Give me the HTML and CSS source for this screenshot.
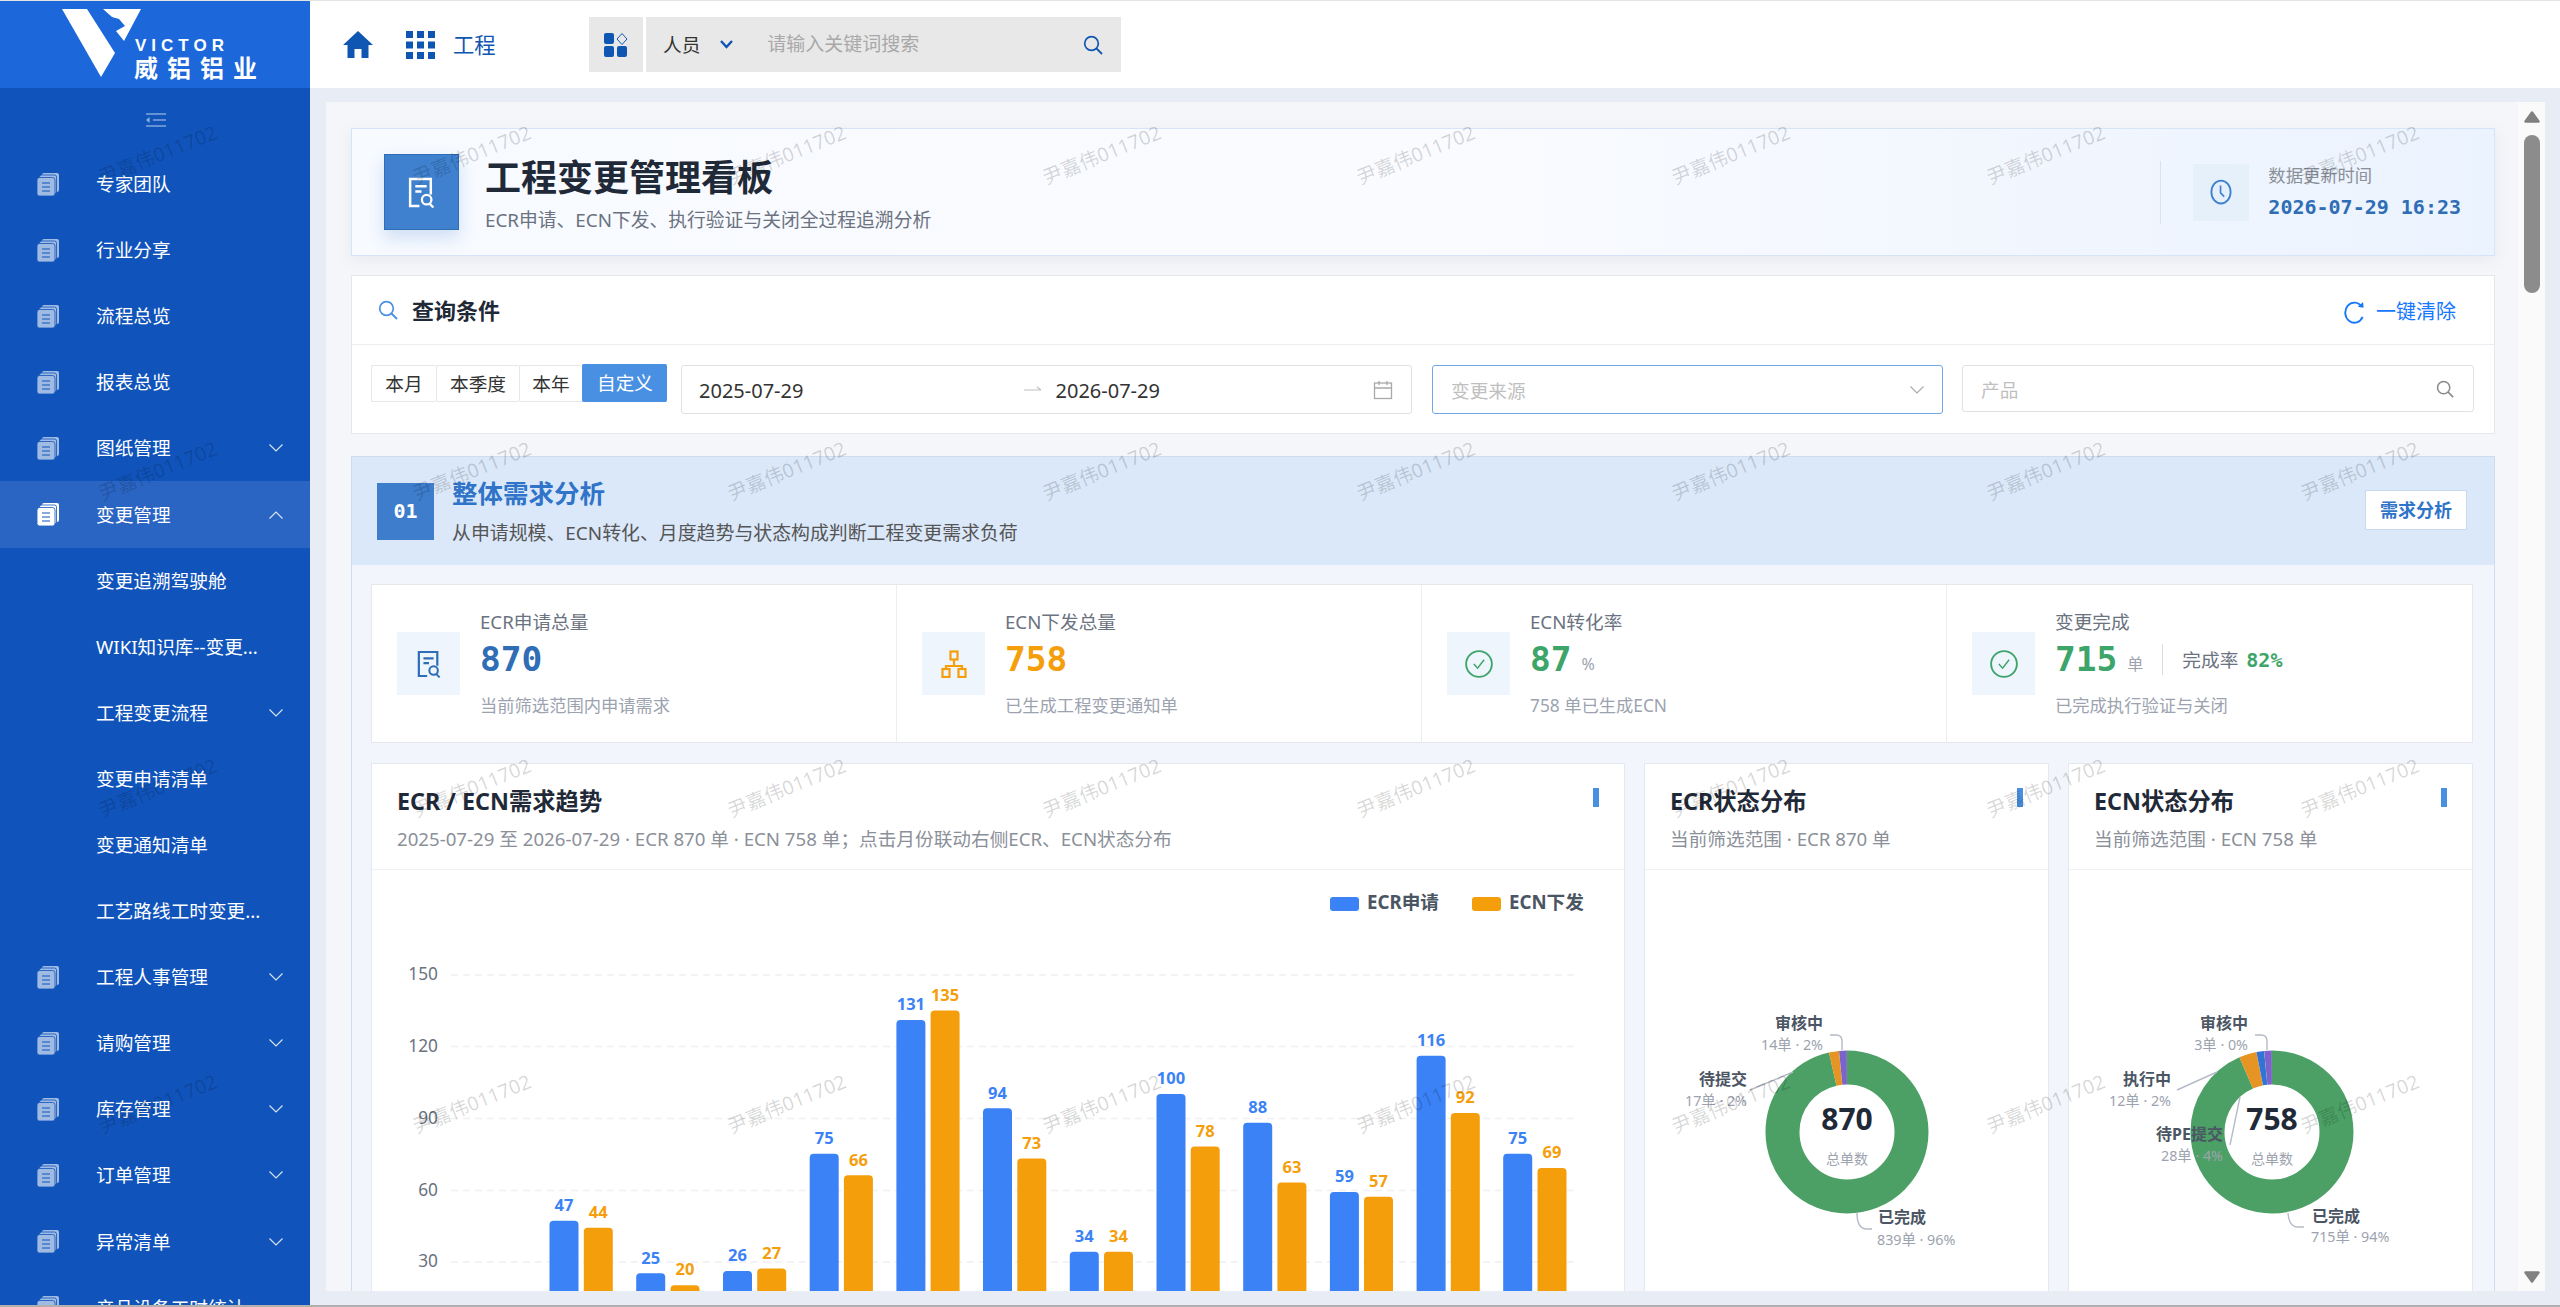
FILE: index.html
```html
<!doctype html>
<html lang="zh-CN">
  <head>
    <meta charset="UTF-8" />
    <meta name="viewport" content="width=device-width, initial-scale=1.0" />
    <title>工程变更管理看板</title>
    <link rel="stylesheet" href="styles.css">
  </head>
  <body>
    <svg class="icon-defs" aria-hidden="true">
      <symbol id="i-docs" viewBox="0 0 22 23">
        <rect x="5" y="0" width="17" height="19" rx="2" fill="#fff" />
        <rect x="2.5" y="2" width="17" height="19" rx="2" fill="#fff" stroke="#1054bb" stroke-width="0.8" />
        <rect x="0" y="4.5" width="18" height="18.5" rx="2.5" fill="#fff" stroke="#1054bb" stroke-width="0.8" />
        <path d="M5 10h8M5 14h8M5 18h8" stroke="#1054bb" stroke-width="1.2" />
      </symbol>
      <symbol id="i-chevron" viewBox="0 0 14 8">
        <path d="M0.5 0.5L7 7L13.5 0.5" fill="none" stroke="currentColor" stroke-width="1.1" />
      </symbol>
      <symbol id="i-search" viewBox="0 0 20 20">
        <circle cx="8.5" cy="8.5" r="6.8" fill="none" stroke="currentColor" stroke-width="1.7" />
        <path d="M13.5 13.5L19 19" stroke="currentColor" stroke-width="1.8" />
      </symbol>
      <symbol id="i-docsearch" viewBox="0 0 26 30">
        <path d="M11 28H2V2h20v15" fill="none" stroke="currentColor" stroke-width="2.4" />
        <path d="M7 9h11M7 14h6" stroke="currentColor" stroke-width="2.4" />
        <circle cx="18" cy="22" r="4.6" fill="none" stroke="currentColor" stroke-width="2.2" />
        <path d="M21 26l3.5 3.5" stroke="currentColor" stroke-width="2.2" />
      </symbol>
      <symbol id="i-check" viewBox="0 0 30 30">
        <circle cx="15" cy="15" r="13.8" fill="none" stroke="currentColor" stroke-width="2" />
        <path d="M9.5 15l4 4.5 7-9" fill="none" stroke="currentColor" stroke-width="1.6" />
      </symbol>
    </svg>

    <div class="app">
      <aside class="sidebar">
        <div class="logo">
          <svg viewBox="0 0 310 87" width="310" height="87">
            <polygon points="62,8 87,8 115,52 101,76" fill="#fff" />
            <polygon points="103,8 141,8 124,40 116,30 125,25 119,18 112,16" fill="#fff" />
            <text class="logo-en" x="135" y="50">VICTOR</text>
            <text class="logo-cn" x="134" y="76">威铝铝业</text>
          </svg>
        </div>
        <div class="collapse">
          <svg viewBox="0 0 20 14" width="20" height="14">
            <path d="M0 1h20M7 7h13M0 13h20" stroke="#b9cdec" stroke-width="1" />
            <path d="M0 7l3.5-3v6z" fill="#8fb0e2" />
          </svg>
        </div>
        <nav class="nav">
          <a class="nav-item"><svg class="nav-icon"><use href="#i-docs" /></svg><span>专家团队</span></a>
          <a class="nav-item"><svg class="nav-icon"><use href="#i-docs" /></svg><span>行业分享</span></a>
          <a class="nav-item"><svg class="nav-icon"><use href="#i-docs" /></svg><span>流程总览</span></a>
          <a class="nav-item"><svg class="nav-icon"><use href="#i-docs" /></svg><span>报表总览</span></a>
          <a class="nav-item"><svg class="nav-icon"><use href="#i-docs" /></svg><span>图纸管理</span><svg class="nav-arrow"><use href="#i-chevron" /></svg></a>
          <a class="nav-item active"><svg class="nav-icon"><use href="#i-docs" /></svg><span>变更管理</span><svg class="nav-arrow up"><use href="#i-chevron" /></svg></a>
          <a class="nav-item sub"><span>变更追溯驾驶舱</span></a>
          <a class="nav-item sub"><span>WIKI知识库--变更...</span></a>
          <a class="nav-item sub"><span>工程变更流程</span><svg class="nav-arrow"><use href="#i-chevron" /></svg></a>
          <a class="nav-item sub"><span>变更申请清单</span></a>
          <a class="nav-item sub"><span>变更通知清单</span></a>
          <a class="nav-item sub"><span>工艺路线工时变更...</span></a>
          <a class="nav-item"><svg class="nav-icon"><use href="#i-docs" /></svg><span>工程人事管理</span><svg class="nav-arrow"><use href="#i-chevron" /></svg></a>
          <a class="nav-item"><svg class="nav-icon"><use href="#i-docs" /></svg><span>请购管理</span><svg class="nav-arrow"><use href="#i-chevron" /></svg></a>
          <a class="nav-item"><svg class="nav-icon"><use href="#i-docs" /></svg><span>库存管理</span><svg class="nav-arrow"><use href="#i-chevron" /></svg></a>
          <a class="nav-item"><svg class="nav-icon"><use href="#i-docs" /></svg><span>订单管理</span><svg class="nav-arrow"><use href="#i-chevron" /></svg></a>
          <a class="nav-item"><svg class="nav-icon"><use href="#i-docs" /></svg><span>异常清单</span><svg class="nav-arrow"><use href="#i-chevron" /></svg></a>
          <a class="nav-item"><svg class="nav-icon"><use href="#i-docs" /></svg><span>产品设备工时统计</span></a>
        </nav>
      </aside>

      <div class="main">
        <header class="topbar">
          <svg class="home-icon" viewBox="0 0 30 27"><path d="M15 0L0 14h4.500v13h7v-9h7v9h7V14H30z" /></svg>
          <svg class="apps-icon" viewBox="0 0 29 28">
            <rect width="7" height="7" /><rect x="11" width="7" height="7" /><rect x="22" width="7" height="7" />
            <rect y="10.500" width="7" height="7" /><rect x="11" y="10.500" width="7" height="7" /><rect x="22" y="10.500" width="7" height="7" />
            <rect y="21" width="7" height="7" /><rect x="11" y="21" width="7" height="7" /><rect x="22" y="21" width="7" height="7" />
          </svg>
          <span class="app-name">工程</span>
          <div class="top-search">
            <div class="ts-icon">
              <svg viewBox="0 0 26 24" width="26" height="24">
                <rect x="1" y="0" width="10" height="11" rx="2" fill="#0f56b3" />
                <rect x="1" y="13" width="10" height="11" rx="2" fill="#0f56b3" />
                <rect x="14" y="13" width="10" height="11" rx="2" fill="#0f56b3" />
                <path d="M19 0.500l5 5.500-5 5.500-5-5.500z" fill="none" stroke="#0f56b3" stroke-width="1" />
              </svg>
            </div>
            <div class="ts-box">
              <span class="ts-type">人员</span>
              <svg class="ts-caret" viewBox="0 0 13 9" width="13" height="9"><path d="M1 1l5.500 6L12 1" fill="none" stroke="#0f56b3" stroke-width="2.400" /></svg>
              <span class="ts-placeholder">请输入关键词搜索</span>
              <svg class="ts-search"><use href="#i-search" /></svg>
            </div>
          </div>
        </header>

        <div class="workspace">
          <div class="panel">
            <div class="content">
              <section class="hero">
                <div class="hero-icon"><svg width="27" height="31"><use href="#i-docsearch" /></svg></div>
                <div class="hero-text">
                  <h1>工程变更管理看板</h1>
                  <p>ECR申请、ECN下发、执行验证与关闭全过程追溯分析</p>
                </div>
                <div class="hero-time">
                  <div class="time-icon">
                    <svg viewBox="0 0 24 28" width="22" height="26">
                      <ellipse cx="12" cy="14" rx="10.500" ry="12.500" fill="none" stroke="#3d80cf" stroke-width="2" />
                      <path d="M11.500 7v8l4 4" fill="none" stroke="#3d80cf" stroke-width="1.800" />
                    </svg>
                  </div>
                  <div>
                    <div class="time-label">数据更新时间</div>
                    <div class="time-value">2026-07-29 16:23</div>
                  </div>
                </div>
              </section>

              <section class="query">
                <div class="query-head">
                  <svg class="query-icon"><use href="#i-search" /></svg>
                  <h2>查询条件</h2>
                  <a class="clear-btn">
                    <svg viewBox="0 0 22 24" width="21" height="24">
                      <path d="M18.500 6.500A9.500 10.500 0 1 0 19.500 17" fill="none" stroke="#1677ff" stroke-width="2" />
                      <path d="M14.500 6.500L20.500 7.500L20 1.500z" fill="#1677ff" />
                    </svg>
                    一键清除
                  </a>
                </div>
                <div class="query-row">
                  <div class="range-tabs">
                    <span class="tab tab-a">本月</span>
                    <span class="tab tab-b">本季度</span>
                    <span class="tab tab-c">本年</span>
                    <span class="tab tab-d on">自定义</span>
                  </div>
                  <div class="field date-range">
                    <span class="date">2025-07-29</span>
                    <svg class="date-arrow" viewBox="0 0 18 8" width="18" height="8"><path d="M0 4h17M13 1l4 3" fill="none" stroke="#bfbfbf" stroke-width="1.200" /></svg>
                    <span class="date">2026-07-29</span>
                    <svg viewBox="0 0 20 20" width="20" height="20">
                      <rect x="1.500" y="3" width="17" height="15.500" fill="none" stroke="#a9a9a9" stroke-width="1.300" />
                      <path d="M1.500 8h17M6 1v4M14 1v4" stroke="#a9a9a9" stroke-width="1.300" />
                    </svg>
                  </div>
                  <div class="field select-field">
                    <span class="placeholder">变更来源</span>
                    <svg class="select-arrow"><use href="#i-chevron" /></svg>
                  </div>
                  <div class="field product-field">
                    <span class="placeholder">产品</span>
                    <svg class="product-search"><use href="#i-search" /></svg>
                  </div>
                </div>
              </section>

              <section class="demand">
                <div class="demand-head">
                  <div class="demand-no">01</div>
                  <div class="demand-title">
                    <h2>整体需求分析</h2>
                    <p>从申请规模、ECN转化、月度趋势与状态构成判断工程变更需求负荷</p>
                  </div>
                  <span class="demand-tag">需求分析</span>
                </div>

                <div class="demand-body">
                  <div class="stats">
                    <div class="stat">
                      <div class="stat-icon blue"><svg width="24" height="28"><use href="#i-docsearch" /></svg></div>
                      <div>
                        <div class="stat-label">ECR申请总量</div>
                        <div class="stat-num"><b class="blue">870</b></div>
                        <div class="stat-sub">当前筛选范围内申请需求</div>
                      </div>
                    </div>
                    <div class="stat">
                      <div class="stat-icon orange">
                        <svg viewBox="0 0 26 28" width="26" height="28" fill="none" stroke="#f59e0b" stroke-width="2.200">
                          <rect x="9.500" y="1.500" width="7" height="8" />
                          <path d="M13 10v6M5 20v-4h16v4" />
                          <rect x="1.500" y="19" width="7" height="8" />
                          <rect x="17.500" y="19" width="7" height="8" />
                        </svg>
                      </div>
                      <div>
                        <div class="stat-label">ECN下发总量</div>
                        <div class="stat-num"><b class="orange">758</b></div>
                        <div class="stat-sub">已生成工程变更通知单</div>
                      </div>
                    </div>
                    <div class="stat">
                      <div class="stat-icon green"><svg width="28" height="30"><use href="#i-check" /></svg></div>
                      <div>
                        <div class="stat-label">ECN转化率</div>
                        <div class="stat-num"><b class="green">87</b><small>%</small></div>
                        <div class="stat-sub">758 单已生成ECN</div>
                      </div>
                    </div>
                    <div class="stat">
                      <div class="stat-icon green"><svg width="28" height="30"><use href="#i-check" /></svg></div>
                      <div>
                        <div class="stat-label">变更完成</div>
                        <div class="stat-num">
                          <b class="green">715</b><small>单</small>
                          <span class="stat-rate">完成率<em>82%</em></span>
                        </div>
                        <div class="stat-sub">已完成执行验证与关闭</div>
                      </div>
                    </div>
                  </div>

                  <div class="charts">
                    <div class="chart-card">
                      <div class="chart-head">
                        <div>
                          <h3>ECR / ECN需求趋势</h3>
                          <p>2025-07-29 至 2026-07-29 · ECR 870 单 · ECN 758 单；点击月份联动右侧ECR、ECN状态分布</p>
                        </div>
                        <i class="chart-mark"></i>
                      </div>
                      <svg class="chart-svg" viewBox="372 870 1251 470" width="1251" height="470">
                        <g class="legend">
                          <rect x="1330" y="897" width="29" height="14" rx="3" fill="#3b82f6" />
                          <text x="1367" y="909">ECR申请</text>
                          <rect x="1472" y="897" width="29" height="14" rx="3" fill="#f59e0b" />
                          <text x="1509" y="909">ECN下发</text>
                        </g>
                        <g class="grid-lines">
                          <path d="M451 975H1578M451 1046.500H1578M451 1118.500H1578M451 1190.500H1578M451 1262H1578" />
                        </g>
                        <g class="y-axis">
                          <text x="438" y="980">150</text>
                          <text x="438" y="1052">120</text>
                          <text x="438" y="1124">90</text>
                          <text x="438" y="1196">60</text>
                          <text x="438" y="1267">30</text>
                        </g>
                        <g fill="#3b82f6">
                          <rect x="549.500" y="1220.700" width="29" height="112.300" rx="4" />
                          <rect x="636.200" y="1273.200" width="29" height="59.800" rx="4" />
                          <rect x="723" y="1270.900" width="29" height="62.100" rx="4" />
                          <rect x="809.700" y="1153.800" width="29" height="179.200" rx="4" />
                          <rect x="896.400" y="1019.900" width="29" height="313.100" rx="4" />
                          <rect x="983" y="1108.300" width="29" height="224.700" rx="4" />
                          <rect x="1069.800" y="1251.700" width="29" height="81.300" rx="4" />
                          <rect x="1156.500" y="1094" width="29" height="239" rx="4" />
                          <rect x="1243.200" y="1122.700" width="29" height="210.300" rx="4" />
                          <rect x="1329.900" y="1192" width="29" height="141" rx="4" />
                          <rect x="1416.600" y="1055.800" width="29" height="277.200" rx="4" />
                          <rect x="1503.200" y="1153.800" width="29" height="179.200" rx="4" />
                        </g>
                        <g fill="#f59e0b">
                          <rect x="583.800" y="1227.800" width="29" height="105.200" rx="4" />
                          <rect x="670.500" y="1285.200" width="29" height="47.800" rx="4" />
                          <rect x="757.200" y="1268.500" width="29" height="64.500" rx="4" />
                          <rect x="843.900" y="1175.300" width="29" height="157.700" rx="4" />
                          <rect x="930.600" y="1010.400" width="29" height="322.600" rx="4" />
                          <rect x="1017.300" y="1158.500" width="29" height="174.500" rx="4" />
                          <rect x="1104" y="1251.700" width="29" height="81.300" rx="4" />
                          <rect x="1190.700" y="1146.600" width="29" height="186.400" rx="4" />
                          <rect x="1277.400" y="1182.400" width="29" height="150.600" rx="4" />
                          <rect x="1364" y="1196.800" width="29" height="136.200" rx="4" />
                          <rect x="1450.800" y="1113.100" width="29" height="219.900" rx="4" />
                          <rect x="1537.500" y="1168.100" width="29" height="164.900" rx="4" />
                        </g>
                        <g class="bar-labels" fill="#3b82f6">
                          <text x="564" y="1211">47</text>
                          <text x="650.700" y="1264">25</text>
                          <text x="737.500" y="1261">26</text>
                          <text x="824.200" y="1144">75</text>
                          <text x="910.900" y="1010">131</text>
                          <text x="997.500" y="1099">94</text>
                          <text x="1084.300" y="1242">34</text>
                          <text x="1171" y="1084">100</text>
                          <text x="1257.700" y="1113">88</text>
                          <text x="1344.400" y="1182">59</text>
                          <text x="1431.100" y="1046">116</text>
                          <text x="1517.700" y="1144">75</text>
                        </g>
                        <g class="bar-labels" fill="#f59e0b">
                          <text x="598.300" y="1218">44</text>
                          <text x="685" y="1275">20</text>
                          <text x="771.700" y="1259">27</text>
                          <text x="858.400" y="1166">66</text>
                          <text x="945.100" y="1001">135</text>
                          <text x="1031.800" y="1149">73</text>
                          <text x="1118.500" y="1242">34</text>
                          <text x="1205.200" y="1137">78</text>
                          <text x="1291.900" y="1173">63</text>
                          <text x="1378.500" y="1187">57</text>
                          <text x="1465.300" y="1103">92</text>
                          <text x="1552" y="1158">69</text>
                        </g>
                      </svg>
                    </div>

                    <div class="chart-card">
                      <div class="chart-head">
                        <div>
                          <h3>ECR状态分布</h3>
                          <p>当前筛选范围 · ECR 870 单</p>
                        </div>
                        <i class="chart-mark"></i>
                      </div>
                      <svg class="chart-svg" viewBox="1645 870 403 421" width="403" height="421">
                        <g fill="none" stroke-width="34">
                          <circle cx="1847" cy="1132" r="64.500" pathLength="360" stroke="#4ca066" stroke-dasharray="347.200 360" transform="rotate(-90 1847 1132)" />
                          <circle cx="1847" cy="1132" r="64.500" pathLength="360" stroke="#e69423" stroke-dasharray="7.200 360" transform="rotate(-102.800 1847 1132)" />
                          <circle cx="1847" cy="1132" r="64.500" pathLength="360" stroke="#7c63c9" stroke-dasharray="5.600 360" transform="rotate(-95.600 1847 1132)" />
                        </g>
                        <g class="leader">
                          <path d="M1830 1035h6q6 0 6 6v9" />
                          <path d="M1750 1090L1793 1072" />
                          <path d="M1857 1213q0 16 10 16h5" />
                        </g>
                        <text class="donut-total" x="1847" y="1130">870</text>
                        <text class="donut-cap" x="1847" y="1164">总单数</text>
                        <text class="donut-name" x="1823" y="1029" text-anchor="end">审核中</text>
                        <text class="donut-sub" x="1823" y="1050" text-anchor="end">14单 · 2%</text>
                        <text class="donut-name" x="1747" y="1085" text-anchor="end">待提交</text>
                        <text class="donut-sub" x="1747" y="1106" text-anchor="end">17单 · 2%</text>
                        <text class="donut-name" x="1878" y="1223">已完成</text>
                        <text class="donut-sub" x="1877" y="1245">839单 · 96%</text>
                      </svg>
                    </div>

                    <div class="chart-card">
                      <div class="chart-head">
                        <div>
                          <h3>ECN状态分布</h3>
                          <p>当前筛选范围 · ECN 758 单</p>
                        </div>
                        <i class="chart-mark"></i>
                      </div>
                      <svg class="chart-svg" viewBox="2069 870 403 421" width="403" height="421">
                        <g fill="none" stroke-width="34">
                          <circle cx="2272" cy="1132" r="64.500" pathLength="360" stroke="#4ca066" stroke-dasharray="336.400 360" transform="rotate(-90 2272 1132)" />
                          <circle cx="2272" cy="1132" r="64.500" pathLength="360" stroke="#e69423" stroke-dasharray="12.600 360" transform="rotate(-113.600 2272 1132)" />
                          <circle cx="2272" cy="1132" r="64.500" pathLength="360" stroke="#3274d6" stroke-dasharray="5.500 360" transform="rotate(-101 2272 1132)" />
                          <circle cx="2272" cy="1132" r="64.500" pathLength="360" stroke="#7c63c9" stroke-dasharray="5.500 360" transform="rotate(-95.500 2272 1132)" />
                        </g>
                        <g class="leader">
                          <path d="M2255 1035h6q6 0 6 6v9" />
                          <path d="M2177 1090L2217 1072" />
                          <path d="M2230 1145L2240 1097" />
                          <path d="M2288 1213q1 14 10 14h6" />
                        </g>
                        <text class="donut-total" x="2272" y="1130">758</text>
                        <text class="donut-cap" x="2272" y="1164">总单数</text>
                        <text class="donut-name" x="2248" y="1029" text-anchor="end">审核中</text>
                        <text class="donut-sub" x="2248" y="1050" text-anchor="end">3单 · 0%</text>
                        <text class="donut-name" x="2171" y="1085" text-anchor="end">执行中</text>
                        <text class="donut-sub" x="2171" y="1106" text-anchor="end">12单 · 2%</text>
                        <text class="donut-name" x="2223" y="1140" text-anchor="end">待PE提交</text>
                        <text class="donut-sub" x="2223" y="1161" text-anchor="end">28单 · 4%</text>
                        <text class="donut-name" x="2312" y="1222">已完成</text>
                        <text class="donut-sub" x="2311" y="1242">715单 · 94%</text>
                      </svg>
                    </div>
                  </div>
                </div>
              </section>
            </div>
            <div class="scroll-track">
              <svg class="scroll-arrow" viewBox="0 0 16 12" width="16" height="12"><path d="M8 1.500L14.500 10.500H1.500z" stroke-width="2.500" /></svg>
              <div class="scroll-thumb"></div>
              <svg class="scroll-arrow down" viewBox="0 0 16 12" width="16" height="12"><path d="M8 10.500L14.500 1.500H1.500z" stroke-width="2.500" /></svg>
            </div>
          </div>
        </div>
      </div>
    </div>
    <div class="hscroll"></div>

    <div class="watermarks">
      <span>尹嘉伟011702</span><span>尹嘉伟011702</span><span>尹嘉伟011702</span><span>尹嘉伟011702</span><span>尹嘉伟011702</span><span>尹嘉伟011702</span><span>尹嘉伟011702</span><span>尹嘉伟011702</span>
      <span>尹嘉伟011702</span><span>尹嘉伟011702</span><span>尹嘉伟011702</span><span>尹嘉伟011702</span><span>尹嘉伟011702</span><span>尹嘉伟011702</span><span>尹嘉伟011702</span><span>尹嘉伟011702</span>
      <span>尹嘉伟011702</span><span>尹嘉伟011702</span><span>尹嘉伟011702</span><span>尹嘉伟011702</span><span>尹嘉伟011702</span><span>尹嘉伟011702</span><span>尹嘉伟011702</span><span>尹嘉伟011702</span>
      <span>尹嘉伟011702</span><span>尹嘉伟011702</span><span>尹嘉伟011702</span><span>尹嘉伟011702</span><span>尹嘉伟011702</span><span>尹嘉伟011702</span><span>尹嘉伟011702</span><span>尹嘉伟011702</span>
    </div>
  </body>
</html>
```

FILE: styles.css
```css
* {
  box-sizing: border-box;
}
html,
body {
  margin: 0;
  height: 100%;
  overflow: hidden;
}
body {
  position: relative;
  display: flex;
  flex-direction: column;
  font-family: "Noto Sans", "Noto Sans CJK SC", sans-serif;
  font-size: 18.67px;
  line-height: 1.5;
  color: #333;
  background: #e8ecf4;
}
h1,
h2,
h3,
p {
  margin: 0;
}
.icon-defs {
  position: absolute;
  width: 0;
  height: 0;
}
.app {
  flex: 1;
  min-height: 0;
  display: flex;
  border-top: 1px solid #e4e4e4;
}
.hscroll {
  height: 2px;
  background: #b0b0b0;
}

/* sidebar */
.sidebar {
  width: 310px;
  flex: none;
  overflow: hidden;
  background: #1054bb;
  color: #fff;
}
.logo {
  height: 87px;
  background: #1c68da;
}
.logo svg {
  display: block;
}
.logo-en {
  font-family: "Liberation Sans", sans-serif;
  font-size: 17px;
  font-weight: 700;
  letter-spacing: 5px;
  fill: #fff;
}
.logo-cn {
  font-size: 24px;
  font-weight: 700;
  letter-spacing: 9px;
  fill: #fff;
}
.collapse {
  height: 63px;
  display: flex;
  align-items: center;
  justify-content: center;
  padding-left: 2px;
}
.nav-item {
  height: 66.1px;
  display: flex;
  align-items: center;
  padding-left: 37px;
  padding-right: 27px;
}
.nav-item span {
  margin-left: 37px;
  white-space: nowrap;
}
.nav-item.sub {
  padding-left: 96px;
}
.nav-item.sub span {
  margin-left: 0;
}
.nav-item.active {
  background: #2b65c3;
}
.nav-icon {
  width: 22px;
  height: 23px;
  opacity: 0.6;
  flex: none;
}
.active .nav-icon {
  opacity: 1;
}
.nav-arrow {
  width: 14px;
  height: 8px;
  margin-left: auto;
  color: #dbe6f7;
}
.nav-arrow.up {
  transform: rotate(180deg);
}

/* top bar */
.main {
  flex: 1;
  min-width: 0;
  display: flex;
  flex-direction: column;
}
.topbar {
  height: 87px;
  flex: none;
  display: flex;
  align-items: center;
  background: #fff;
  padding-left: 33px;
  color: #0f56b3;
}
.home-icon {
  width: 30px;
  height: 27px;
  fill: #0f56b3;
}
.apps-icon {
  width: 29px;
  height: 28px;
  margin-left: 33px;
  fill: #0f56b3;
}
.app-name {
  font-size: 21.33px;
  margin-left: 18px;
  width: 136px;
}
.top-search {
  display: flex;
  height: 55px;
  gap: 3px;
}
.ts-icon {
  width: 54px;
  background: #e8e8e8;
  display: flex;
  align-items: center;
  justify-content: center;
}
.ts-box {
  width: 475px;
  background: #e8e8e8;
  display: flex;
  align-items: center;
  padding-left: 17px;
  padding-right: 18px;
}
.ts-type {
  color: #333;
}
.ts-caret {
  margin-left: 20px;
}
.ts-placeholder {
  margin-left: 34px;
  font-size: 19px;
  color: #a8a8a8;
}
.ts-search {
  width: 20px;
  height: 20px;
  margin-left: auto;
  color: #0f56b3;
}

/* workspace */
.workspace {
  flex: 1;
  min-height: 0;
  padding: 14px 15px 14px 16px;
}
.panel {
  height: 100%;
  display: flex;
  background: #f5f6f9;
}
.content {
  flex: 1;
  min-width: 0;
  overflow: hidden;
  padding: 26px 23px 0 25px;
}
.scroll-track {
  width: 27px;
  flex: none;
  background: #fafafa;
  display: flex;
  flex-direction: column;
  align-items: center;
  padding: 9px 0 8px;
}
.scroll-arrow {
  fill: #808080;
  stroke: #808080;
  stroke-linejoin: round;
}
.scroll-arrow.down {
  margin-top: auto;
}
.scroll-thumb {
  width: 16px;
  height: 158px;
  margin-top: 12px;
  border-radius: 8px;
  background: #8c8c8c;
}

/* hero */
.hero {
  height: 128px;
  display: flex;
  align-items: center;
  padding-left: 32px;
  border: 1px solid #d6e4f7;
  background: linear-gradient(90deg, #f7faff 0%, #fafbff 50%, #ebf3fe 100%);
  box-shadow: 0 4px 14px rgba(60, 90, 140, 0.08);
}
.hero-icon {
  width: 75px;
  height: 76px;
  display: flex;
  align-items: center;
  justify-content: center;
  background: #3f81cf;
  border: 1px solid #2f6db5;
  color: #fff;
  box-shadow: 0 8px 16px rgba(63, 129, 207, 0.22);
}
.hero-text {
  margin-left: 26px;
}
.hero-text h1 {
  font-size: 36px;
  line-height: 48px;
  padding-top: 3px;
  font-weight: 700;
  color: #1f2937;
}
.hero-text p {
  font-size: 18.8px;
  line-height: 28px;
  margin-top: 4px;
  color: #6b7280;
}
.hero-time {
  margin-left: auto;
  height: 63px;
  display: flex;
  align-items: center;
  padding-left: 32px;
  padding-right: 33px;
  border-left: 1px solid #d9e3f0;
}
.time-icon {
  width: 56px;
  height: 57px;
  margin-right: 19px;
  display: flex;
  align-items: center;
  justify-content: center;
  background: #e6f0fb;
}
.time-label {
  font-size: 17.3px;
  line-height: 26px;
  color: #8a8f98;
}
.time-value {
  font-family: "DejaVu Sans Mono", monospace;
  font-size: 20px;
  line-height: 30px;
  font-weight: 700;
  margin-top: 3px;
  color: #2f6db5;
}

/* query */
.query {
  height: 159px;
  margin-top: 19px;
  background: #fff;
  border: 1px solid #e5e7eb;
}
.query-head {
  height: 69px;
  display: flex;
  align-items: center;
  padding-left: 26px;
  padding-right: 38px;
  border-bottom: 1px solid #eceef2;
}
.query-icon {
  width: 20px;
  height: 20px;
  color: #4a90e2;
}
.query-head h2 {
  margin-left: 14px;
  font-size: 22px;
  font-weight: 700;
  color: #1f2937;
}
.clear-btn {
  margin-left: auto;
  margin-top: 3px;
  display: flex;
  align-items: center;
  gap: 11px;
  font-size: 20px;
  color: #1677ff;
}
.query-row {
  display: flex;
  align-items: flex-start;
  padding: 20px 20px 0 19px;
}
.range-tabs {
  display: flex;
  margin-right: 14px;
}
.tab {
  height: 37px;
  line-height: 35px;
  text-align: center;
  background: #fff;
  border: 1px solid #e5e7eb;
  border-right: 0;
  border-radius: 2px;
  color: #333;
}
.tab-a {
  width: 65px;
}
.tab-b {
  width: 83px;
}
.tab-c {
  width: 63px;
}
.tab-d {
  width: 85px;
}
.tab.on {
  background: #4a90e2;
  border-color: #4a90e2;
  color: #fff;
  margin-top: -1px;
  height: 38px;
}
.field {
  height: 49px;
  display: flex;
  align-items: center;
  background: #fff;
  border: 1px solid #dfe1e6;
  border-radius: 3px;
}
.date-range {
  width: 731px;
  padding-left: 17px;
  padding-right: 18px;
}
.date {
  flex: 1;
  font-size: 20px;
  padding-top: 3px;
}
.date-arrow {
  margin-left: 7px;
  margin-right: 14px;
}
.select-field {
  width: 511px;
  margin-left: 20px;
  padding-left: 18px;
  padding-right: 18px;
  border-color: #6fa8e8;
}
.placeholder {
  color: #bfbfbf;
  padding-top: 3px;
}
.select-arrow {
  width: 14px;
  height: 8px;
  margin-left: auto;
  color: #a9a9a9;
}
.product-field {
  width: 512px;
  height: 47px;
  margin-left: 19px;
  padding-left: 18px;
  padding-right: 19px;
}
.product-search {
  width: 18px;
  height: 18px;
  margin-left: auto;
  color: #8a8a8a;
}

/* demand section */
.demand {
  margin-top: 22px;
  border: 1px solid #cfdcf0;
  border-bottom: 0;
  background: #f2f5fb;
}
.demand-head {
  height: 108px;
  display: flex;
  align-items: center;
  padding-left: 25px;
  padding-right: 27px;
  background: #dbe8f9;
}
.demand-no {
  width: 57px;
  height: 57px;
  line-height: 57px;
  text-align: center;
  font-family: "DejaVu Sans Mono", monospace;
  font-size: 20px;
  font-weight: 700;
  color: #fff;
  background: #3d7dcc;
}
.demand-title {
  margin-left: 18px;
}
.demand-title h2 {
  font-size: 25.5px;
  line-height: 34px;
  font-weight: 700;
  color: #2f74c8;
}
.demand-title p {
  font-size: 18.9px;
  line-height: 28px;
  margin-top: 9px;
  color: #555;
}
.demand-tag {
  margin-left: auto;
  margin-top: -2px;
  width: 102px;
  height: 40px;
  line-height: 38px;
  text-align: center;
  font-size: 18px;
  font-weight: 700;
  color: #2f74c8;
  background: #fff;
  border: 1px solid #c9daf0;
}
.demand-body {
  padding: 19px 21px 0 19px;
}

/* stats */
.stats {
  height: 159px;
  display: grid;
  grid-template-columns: 525px 525px 525px 1fr;
  background: #fff;
  border: 1px solid #e5e7eb;
}
.stat {
  display: flex;
  align-items: center;
  padding-left: 25px;
  border-right: 1px solid #eceef2;
}
.stat:last-child {
  border-right: 0;
}
.stat-icon {
  width: 63px;
  height: 63px;
  flex: none;
  margin-right: 20px;
  display: flex;
  align-items: center;
  justify-content: center;
  background: #eef5fd;
}
.stat-icon.blue {
  color: #2f6db5;
}
.stat-icon.green {
  color: #3ea56a;
}
.stat-label {
  line-height: 27px;
  color: #6b7280;
}
.stat-num {
  height: 48px;
  padding-top: 1px;
  display: flex;
  align-items: center;
}
.stat-num b {
  font-family: "DejaVu Sans Mono", monospace;
  font-size: 34.5px;
  font-weight: 700;
}
b.blue {
  color: #2f6db5;
}
b.orange {
  color: #f59e0b;
}
b.green {
  color: #3ea56a;
}
.stat-num small {
  font-size: 16px;
  margin-left: 10px;
  padding-top: 8px;
  color: #9ca3af;
}
.stat-rate {
  margin-left: 19px;
  padding-left: 19px;
  height: 31px;
  line-height: 31px;
  border-left: 1px solid #d9dde3;
  color: #6b7280;
}
.stat-rate em {
  margin-left: 8px;
  font-style: normal;
  font-weight: 700;
  font-family: "DejaVu Sans Mono", monospace;
  font-size: 20px;
  color: #3ea56a;
}
.stat-sub {
  font-size: 17.3px;
  line-height: 27px;
  margin-top: 9px;
  color: #9ca3af;
}

/* charts */
.charts {
  display: grid;
  grid-template-columns: 1fr 405px 405px;
  gap: 19px;
  margin-top: 20px;
}
.chart-card {
  height: 560px;
  background: #fff;
  border: 1px solid #e3e8f1;
}
.chart-head {
  height: 106px;
  display: flex;
  justify-content: space-between;
  padding: 22px 25px 0;
  border-bottom: 1px solid #eef0f4;
}
.chart-head h3 {
  font-size: 23.3px;
  line-height: 30px;
  font-weight: 700;
  color: #1f2937;
}
.chart-head p {
  font-size: 18.67px;
  line-height: 30px;
  margin-top: 8px;
  color: #8b9099;
  white-space: nowrap;
}
.chart-mark {
  width: 6px;
  height: 19px;
  margin-top: 2px;
  background: #4a90e2;
}
.chart-svg {
  display: block;
}
.legend text {
  font-size: 18.67px;
  font-weight: 700;
  fill: #4b5563;
}
.grid-lines path {
  fill: none;
  stroke: #eef0f4;
  stroke-width: 1.5;
  stroke-dasharray: 7 5;
}
.y-axis text {
  font-size: 17.3px;
  text-anchor: end;
  fill: #6b7280;
}
.bar-labels text {
  font-size: 16.5px;
  font-weight: 700;
  text-anchor: middle;
}
.leader path {
  fill: none;
  stroke: #b4bac6;
  stroke-width: 1.4;
}
.donut-total {
  font-size: 30px;
  font-weight: 700;
  text-anchor: middle;
  fill: #1f2937;
}
.donut-cap {
  font-size: 14px;
  text-anchor: middle;
  fill: #9ca3af;
}
.donut-name {
  font-size: 16px;
  font-weight: 700;
  fill: #4b5563;
}
.donut-sub {
  font-size: 14.3px;
  fill: #9ca3af;
}

/* watermark overlay */
.watermarks {
  position: absolute;
  top: -4px;
  left: 0;
  display: grid;
  grid-template-columns: repeat(8, 314.7px);
  grid-auto-rows: 316.5px;
  place-items: center;
  pointer-events: none;
}
.watermarks span {
  font-size: 19.5px;
  white-space: nowrap;
  color: rgba(0, 0, 0, 0.16);
  transform: rotate(-22deg);
}
```
